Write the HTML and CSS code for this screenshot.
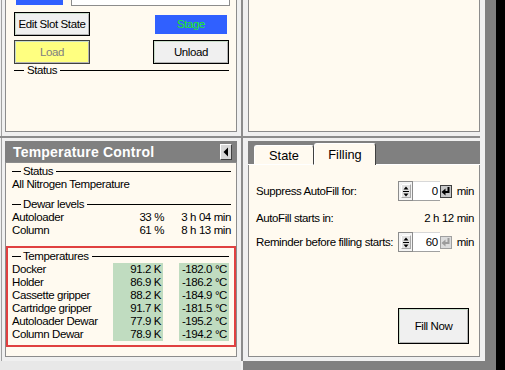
FILE: index.html
```html
<!DOCTYPE html>
<html lang="en">
<head>
    <meta charset="UTF-8">
    <meta name="viewport" content="width=device-width, initial-scale=1.0">
    <title>Autoloader</title>
    <link rel="stylesheet" href="styles.css">
</head>
<body>
<div class="screen">
    <div class="workspace">

        <!-- top left: slot panel (scrolled, top is cut off) -->
        <div class="pane pane-left pane-top area-tl">
            <div class="panel panel-open slot-panel">
                <div class="cut-row">
                    <span class="cut-blue"></span>
                    <span class="cut-field"></span>
                </div>
                <div class="btn-row first">
                    <button class="btn">Edit Slot State</button>
                    <span class="stage">Stage</span>
                </div>
                <div class="btn-row">
                    <button class="btn btn-load">Load</button>
                    <button class="btn">Unload</button>
                </div>
                <div class="group-title"><span>Status</span></div>
            </div>
        </div>

        <div class="vsplit"></div>

        <!-- top right: empty panel -->
        <div class="pane pane-right pane-top area-tr">
            <div class="panel panel-open"></div>
        </div>

        <div class="hsplit"></div>

        <!-- bottom left: temperature control -->
        <div class="pane pane-left pane-bottom area-bl">
            <div class="panel-head">
                <span>Temperature Control</span>
                <button class="collapse">
                    <svg width="6" height="10" viewBox="0 0 6 10"><path d="M5 0.5v9L0.5 5z" fill="#000"/></svg>
                </button>
            </div>
            <div class="panel temp-panel">
                <div class="section status-section">
                    <div class="group-title"><span>Status</span></div>
                    <div class="line">All Nitrogen Temperature</div>
                </div>
                <div class="section dewar-section">
                    <div class="group-title"><span>Dewar levels</span></div>
                    <div class="dewar-grid">
                        <span>Autoloader</span><span class="num">33 %</span><span class="num">3 h 04 min</span>
                        <span>Column</span><span class="num">61 %</span><span class="num">8 h 13 min</span>
                    </div>
                </div>
                <div class="temps">
                    <div class="group-title"><span>Temperatures</span></div>
                    <div class="temp-grid">
                        <span>Docker</span><span class="cell">91.2 K</span><span></span><span class="cell">-182.0 °C</span>
                        <span>Holder</span><span class="cell">86.9 K</span><span></span><span class="cell">-186.2 °C</span>
                        <span>Cassette gripper</span><span class="cell">88.2 K</span><span></span><span class="cell">-184.9 °C</span>
                        <span>Cartridge gripper</span><span class="cell">91.7 K</span><span></span><span class="cell">-181.5 °C</span>
                        <span>Autoloader Dewar</span><span class="cell">77.9 K</span><span></span><span class="cell">-195.2 °C</span>
                        <span>Column Dewar</span><span class="cell">78.9 K</span><span></span><span class="cell">-194.2 °C</span>
                    </div>
                </div>
            </div>
        </div>

        <!-- bottom right: tabs -->
        <div class="pane pane-right pane-bottom area-br">
            <div class="tab-strip">
                <span class="tab-gap"></span>
                <span class="tab">State</span>
                <span class="tab tab-active">Filling</span>
                <span class="tab-gap tab-rest"></span>
            </div>
            <div class="panel tab-body">
                <div class="fill-row">
                    <span>Suppress AutoFill for:</span>
                    <span class="spin-group">
                        <svg class="spin" width="15" height="20" viewBox="0 0 15 20">
                            <rect x="0.5" y="0.5" width="14" height="19" fill="#f4f4f4" stroke="#8c8c8c"/>
                            <rect x="3.5" y="3.5" width="9" height="13" fill="#e2e2e2" stroke="#a8a8a8"/>
                            <path d="M3.5 16.5v-13h9" fill="none" stroke="#fff"/>
                            <path d="M5.5 8.5h5l-2.5-3z" fill="#000"/>
                            <path d="M5 10.5h6" stroke="#000"/>
                            <path d="M5.5 12.5h5l-2.5 3z" fill="#000"/>
                        </svg>
                        <span class="spin-input">0</span>
                        <span class="enter">
                            <svg width="10" height="10" viewBox="0 0 10 10"><path d="M7.5 1v5H3.5" fill="none" stroke="currentColor" stroke-width="2"/><path d="M0.5 6L4.5 2.5v7z" fill="currentColor"/></svg>
                        </span>
                        <span class="unit">min</span>
                    </span>
                </div>
                <div class="fill-row row-starts">
                    <span>AutoFill starts in:</span>
                    <span>2 h 12 min</span>
                </div>
                <div class="fill-row row-reminder">
                    <span>Reminder before filling starts:</span>
                    <span class="spin-group">
                        <svg class="spin" width="15" height="20" viewBox="0 0 15 20">
                            <rect x="0.5" y="0.5" width="14" height="19" fill="#f4f4f4" stroke="#8c8c8c"/>
                            <rect x="3.5" y="3.5" width="9" height="13" fill="#e2e2e2" stroke="#a8a8a8"/>
                            <path d="M3.5 16.5v-13h9" fill="none" stroke="#fff"/>
                            <path d="M5.5 8.5h5l-2.5-3z" fill="#000"/>
                            <path d="M5 10.5h6" stroke="#000"/>
                            <path d="M5.5 12.5h5l-2.5 3z" fill="#000"/>
                        </svg>
                        <span class="spin-input">60</span>
                        <span class="enter enter-off">
                            <svg width="10" height="10" viewBox="0 0 10 10"><path d="M7.5 1v5H3.5" fill="none" stroke="currentColor" stroke-width="2"/><path d="M0.5 6L4.5 2.5v7z" fill="currentColor"/></svg>
                        </span>
                        <span class="unit">min</span>
                    </span>
                </div>
                <button class="btn fill-now">Fill Now</button>
            </div>
        </div>

        <div class="status-left"></div>
        <div class="status-right"></div>
    </div>
    <div class="edge"></div>
</div>
</body>
</html>
```

FILE: styles.css
```css
* {
    box-sizing: border-box;
}
body {
    margin: 0;
    background-color: #f0f0f0;
    color: #000;
    font-family: "Liberation Sans", Arial, sans-serif;
    font-size: 11.5px;
    letter-spacing: -0.4px;
    white-space: nowrap;
}
.screen {
    display: flex;
    width: 505px;
    height: 370px;
    overflow: hidden;
}
.workspace {
    width: 485px;
    display: grid;
    grid-template-columns: 241px 2px 242px;
    grid-template-rows: 136px 2px 223px 9px;
}
.edge {
    width: 20px;
    background-color: #808080;
    border-right: 9px solid #000;
}

/* grid areas */
.area-tl { grid-column: 1; grid-row: 1; }
.area-tr { grid-column: 3; grid-row: 1; }
.area-bl { grid-column: 1; grid-row: 3; }
.area-br { grid-column: 3; grid-row: 3; }
.vsplit {
    grid-column: 2;
    grid-row: 1 / 4;
    background-color: #8c8c8c;
}
.hsplit {
    grid-column: 1 / 4;
    grid-row: 2;
    margin-right: 5px;
    background-color: #8c8c8c;
}
.status-left {
    grid-column: 1;
    grid-row: 4;
    background-color: #e8e8e8;
}
.status-right {
    grid-column: 3;
    grid-row: 4;
    background-color: #808080;
}

/* panes */
.pane {
    display: flex;
    flex-direction: column;
}
.pane-left {
    margin-left: 1px;
    border-left: 1px solid #a0a0a0;
    padding-left: 3px;
    padding-right: 4px;
}
.pane-right {
    padding-left: 5px;
    padding-right: 5px;
}
.pane-top {
    padding-bottom: 4px;
}
.pane-bottom {
    padding-top: 3px;
    padding-bottom: 4px;
}
.panel {
    flex: 1;
    background-color: #fffaf0;
    border: 1px solid #8c8c8c;
}
.panel-open {
    border-top: none;
}

/* buttons */
.btn {
    font: inherit;
    letter-spacing: inherit;
    padding: 0;
    width: 76px;
    height: 24px;
    background-color: #f0f0f0;
    border: 1px solid #000;
    box-shadow: inset 1px 1px 0 #c8dcc8, inset -1px -1px 0 #b4b4b4;
    color: #000;
}
.btn-load {
    background-color: #ffff80;
    color: #808080;
    border-color: #404040;
}

/* slot panel */
.slot-panel {
    display: flex;
    flex-direction: column;
    padding: 0 7px 0 8px;
}
.cut-row {
    display: flex;
    align-items: flex-start;
    height: 6px;
}
.cut-blue {
    flex: none;
    width: 47px;
    height: 5px;
    margin-left: 2px;
    background-color: #3060ff;
}
.cut-field {
    flex: none;
    width: 159px;
    height: 6px;
    margin-left: 8px;
    background-color: #fff;
    border: 1px solid #8c8c8c;
    border-top: none;
}
.btn-row {
    display: flex;
    justify-content: space-between;
    align-items: center;
    margin-top: 4px;
}
.btn-row.first {
    margin-top: 6px;
}
.stage {
    width: 72px;
    height: 19px;
    margin-right: 2px;
    background-color: #3060ff;
    color: #22ee22;
    display: flex;
    align-items: center;
    justify-content: center;
}

/* group titles: — Title ———— */
.group-title {
    display: flex;
    align-items: center;
    height: 13px;
    line-height: 13px;
}
.group-title::before,
.group-title::after {
    content: "";
    height: 1px;
    background-color: #000;
}
.group-title::before {
    width: 9px;
}
.group-title::after {
    flex: 1;
}
.group-title span {
    padding: 0 3px 0 2px;
}
.slot-panel .group-title::before {
    width: 10px;
}
.slot-panel .group-title span {
    padding-left: 3px;
}

/* temperature control */
.panel-head {
    height: 21px;
    flex: none;
    display: flex;
    align-items: center;
    justify-content: space-between;
    padding: 0 5px 0 8px;
    background-color: #808080;
    color: #fff;
    font-weight: bold;
    font-size: 14px;
    letter-spacing: 0.2px;
}
.collapse {
    width: 12px;
    height: 16px;
    padding: 0;
    display: flex;
    align-items: center;
    justify-content: center;
    background-color: #d8d8d8;
    border: 1px solid;
    border-color: #fff #404040 #404040 #fff;
}
.temp-panel {
    display: flex;
    flex-direction: column;
}
.section {
    padding: 0 5px 0 6px;
}
.status-section {
    padding-top: 2px;
}
.line {
    height: 13px;
    line-height: 13px;
}
.dewar-section {
    margin-top: 7px;
}
.dewar-grid {
    display: grid;
    grid-template-columns: 1fr 50px 67px;
    grid-auto-rows: 13px;
    line-height: 13px;
}
.num {
    text-align: right;
}
.temps {
    margin-top: 9px;
    border: 2px solid #e04040;
    padding: 2px 5px 4px 4px;
}
.temp-grid {
    display: grid;
    grid-template-columns: 1fr 50px 16px 50px;
    grid-auto-rows: 13px;
    line-height: 13px;
}
.cell {
    background-color: #c0dcc0;
    text-align: right;
    padding-right: 2px;
}

/* tabs */
.tab-strip {
    height: 24px;
    flex: none;
    display: flex;
    align-items: flex-end;
    background-color: #808080;
    font-size: 12.8px;
    letter-spacing: 0;
}
.tab-gap {
    width: 6px;
    border-bottom: 1px solid #fff;
}
.tab-rest {
    flex: 1;
}
.tab {
    width: 60px;
    height: 20px;
    display: flex;
    align-items: center;
    justify-content: center;
    background-color: #fffaf0;
    border: 1px solid #fff;
    border-right-color: #404040;
    border-radius: 3px 3px 0 0;
}
.tab-active {
    width: 62px;
    height: 22px;
    border-bottom: none;
    padding-bottom: 1px;
}
.tab-body {
    border-top: none;
    display: flex;
    flex-direction: column;
    padding: 16px 5px 0 7px;
}
.fill-row {
    height: 20px;
    display: flex;
    align-items: center;
    justify-content: space-between;
}
.row-starts {
    margin-top: 7px;
}
.row-reminder {
    margin-top: 4px;
}
.spin-group {
    display: flex;
    align-items: center;
}
.spin {
    display: block;
}
.spin-input {
    width: 27px;
    height: 20px;
    line-height: 18px;
    text-align: right;
    padding-right: 2px;
    background-color: #fff;
    border-top: 1px solid #d8d8d8;
    border-bottom: 1px solid #a0a0a0;
}
.enter {
    width: 12px;
    height: 13px;
    display: flex;
    align-items: center;
    justify-content: center;
    background-color: #c8c8c8;
    border: 1px solid #404040;
    color: #000;
}
.enter-off {
    background-color: #dcdcdc;
    border-color: #a0a0a0;
    color: #9c9c9c;
}
.unit {
    margin-left: 5px;
}
.fill-now {
    width: 71px;
    height: 36px;
    margin-top: auto;
    margin-right: 5px;
    margin-bottom: 12px;
    align-self: flex-end;
}
```
